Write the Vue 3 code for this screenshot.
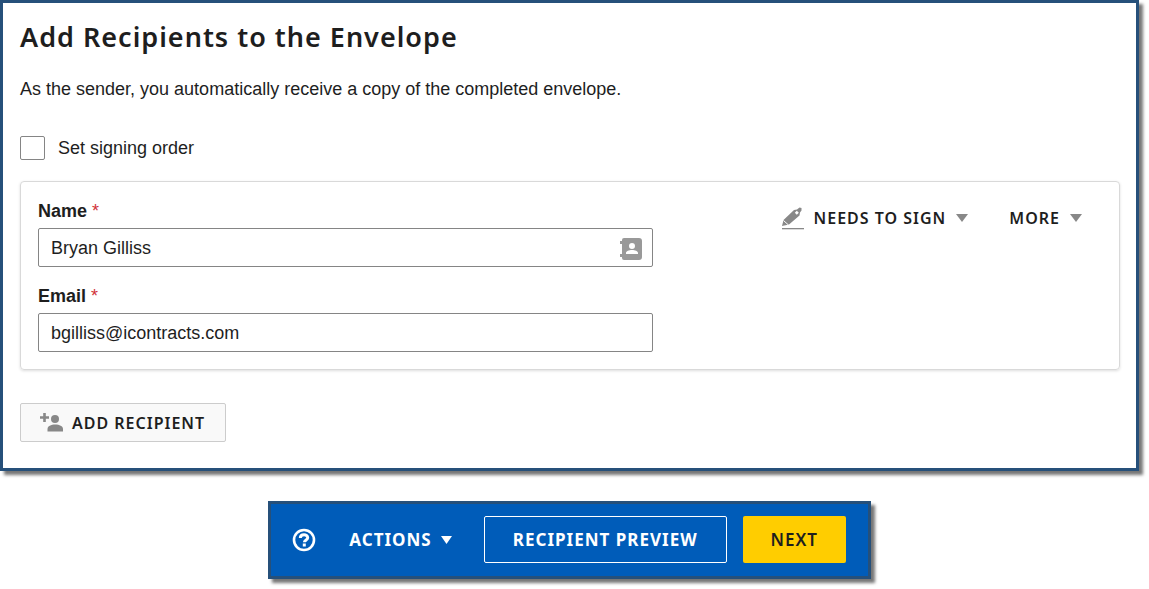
<script setup>
import { ref } from 'vue'

const ordered = ref(false)
const name = ref('Bryan Gilliss')
const email = ref('bgilliss@icontracts.com')
</script>

<template>
  <main class="page">
    <section class="panel">
      <h1>Add Recipients to the Envelope</h1>
      <p class="intro">As the sender, you automatically receive a copy of the completed envelope.</p>

      <div class="order">
        <input id="order" v-model="ordered" type="checkbox" />
        <label for="order">Set signing order</label>
      </div>

      <div class="card">
        <div class="fields">
          <div class="field">
            <label for="name">Name <span class="required">*</span></label>
            <div class="control">
              <input id="name" v-model="name" type="text" />
              <button class="contacts" type="button" aria-label="Address book">
                <svg width="24" height="24" viewBox="0 0 24 24" fill="#999">
                  <path fill-rule="evenodd" d="M5 1h15a3 3 0 0 1 3 3v16a3 3 0 0 1-3 3H5a2 2 0 0 1-2-2v-1H1v-3h2V7H1V4h2V3a2 2 0 0 1 2-2zM13 6a3 3 0 1 0 0 6 3 3 0 0 0 0-6zM7 17h12v-1c0-2-3-3-6-3s-6 1-6 3z" />
                </svg>
              </button>
            </div>
          </div>
          <div class="field">
            <label for="email">Email <span class="required">*</span></label>
            <div class="control">
              <input id="email" v-model="email" type="text" />
            </div>
          </div>
        </div>

        <div class="options">
          <button class="option" type="button">
            <svg class="pen" width="23" height="23" viewBox="0 0 23 23" fill="#888">
              <path d="M1 21h22v1.300H1z" />
              <path fill-rule="evenodd" d="M1 19l1.500-6L13 3l3-.5L18.500.5l2 .5v2.500l-1.500 2-.5 3L8 17.500zM15.800 3.800l-2 2 2 2 2-2z" />
              <path d="M2.500 13.500l5 4.500" stroke="#fff" stroke-width="1" />
            </svg>
            <span>NEEDS TO SIGN</span>
            <svg class="caret" width="12" height="8" viewBox="0 0 12 8" fill="#888"><path d="M0 0h12L6 8z" /></svg>
          </button>
          <button class="option" type="button">
            <span>MORE</span>
            <svg class="caret" width="12" height="8" viewBox="0 0 12 8" fill="#888"><path d="M0 0h12L6 8z" /></svg>
          </button>
        </div>
      </div>

      <button class="add" type="button">
        <svg width="24" height="20" viewBox="0 0 24 20" fill="#888">
          <path d="M3.200 0h2.600v3.200H9v2.600H5.800V9H3.200V5.800H0V3.200h3.200z" />
          <circle cx="15" cy="6" r="4" />
          <path d="M7.500 18.500V16c0-3 3.500-4.500 7.700-4.500S23 13 23 16v2.500z" />
        </svg>
        <span>ADD RECIPIENT</span>
      </button>
    </section>

    <footer class="bar">
      <button class="help" type="button" aria-label="Help">
        <svg width="24" height="24" viewBox="0 0 24 24" fill="none" stroke="#fff">
          <circle cx="12" cy="12" r="10" stroke-width="2.600" />
          <path d="M8.300 10c0-4.200 7.400-4.200 7.400-.3 0 2.300-3.300 2.200-3.300 4.600" stroke-width="3" />
          <path d="M10.800 15.500h3v3h-3z" fill="#fff" stroke="none" />
        </svg>
      </button>
      <button class="actions" type="button">
        <span>ACTIONS</span>
        <svg width="11" height="8" viewBox="0 0 11 8" fill="#fff"><path d="M0 0h11L5.500 8z" /></svg>
      </button>
      <button class="preview" type="button">RECIPIENT PREVIEW</button>
      <button class="next" type="button">NEXT</button>
    </footer>
  </main>
</template>

<style>
body {
  background: #fff;
}
</style>

<style scoped>
.page {
  display: flex;
  flex-direction: column;
  align-items: center;
  gap: 30px;
  padding: 0 10px 10px 0;
  color: #1e1e1e;
  font: 18px/24px "Liberation Sans", Arial, sans-serif;
}

.page * {
  box-sizing: border-box;
}

.panel {
  align-self: stretch;
  padding: 18px 16px 26px 17px;
  border: 3px solid #26507a;
  box-shadow: 4px 4px 3px #777;
}

h1 {
  margin: 0;
  font: 600 27px/32px "Noto Sans", sans-serif;
  letter-spacing: 1px;
}

.intro {
  margin: 24px 0 35px;
}

.order {
  display: flex;
  align-items: center;
  gap: 13px;
}

.order input {
  appearance: none;
  width: 25px;
  height: 24px;
  margin: 0;
  border: 1px solid #858585;
  border-radius: 2px;
  background: #fff;
}

.order input:checked {
  background: #005cb9;
}

.card {
  display: flex;
  justify-content: space-between;
  gap: 24px;
  margin: 21px 0 33px;
  padding: 17px 37px 17px 17px;
  border: 1px solid #d9d9d9;
  border-radius: 4px;
  box-shadow: 0 1px 3px #ddd;
}

.fields {
  display: flex;
  flex: 0 1 615px;
  flex-direction: column;
  gap: 17px;
}

.field {
  display: flex;
  flex-direction: column;
  gap: 5px;
}

.field label {
  font-weight: 700;
}

.required {
  color: #d13239;
  font-weight: 400;
}

.control {
  display: flex;
  align-items: center;
  height: 39px;
  border: 1px solid #858585;
  border-radius: 2px;
}

.control input {
  flex: 1;
  min-width: 0;
  padding: 0 12px;
  border: 0;
  outline: 0;
  background: none;
  color: inherit;
  font: inherit;
}

button {
  display: flex;
  align-items: center;
  justify-content: center;
  padding: 0;
  border: 0;
  background: none;
  color: inherit;
  font: 600 16px/24px "Noto Sans", sans-serif;
  letter-spacing: 1px;
  white-space: nowrap;
}

.contacts {
  margin: 2px 9px 0 0;
}

.options {
  display: flex;
  align-items: flex-start;
  gap: 41px;
  padding-top: 7px;
}

.option {
  gap: 10px;
}

.add {
  gap: 8px;
  height: 39px;
  padding: 0 20px 0 19px;
  border: 1px solid #ccc;
  border-radius: 2px;
  background: #f9f9f9;
}

.bar {
  display: flex;
  align-items: center;
  padding: 12px 22px 13px 21px;
  border: 3px solid #26507a;
  background: #005cb9;
  box-shadow: 4px 4px 3px #777;
  color: #fff;
}

.bar button {
  font-size: 17px;
}

.actions {
  gap: 9px;
  margin: 0 32px 0 33px;
}

.bar .actions,
.bar .preview {
  font-weight: 700;
}

.preview,
.next {
  height: 47px;
  border-radius: 2px;
}

.preview {
  min-width: 243px;
  padding: 0 24px;
  border: 1px solid #fff;
}

.next {
  min-width: 103px;
  margin-left: 16px;
  background: #ffcd00;
  color: #1e1e1e;
}
</style>
